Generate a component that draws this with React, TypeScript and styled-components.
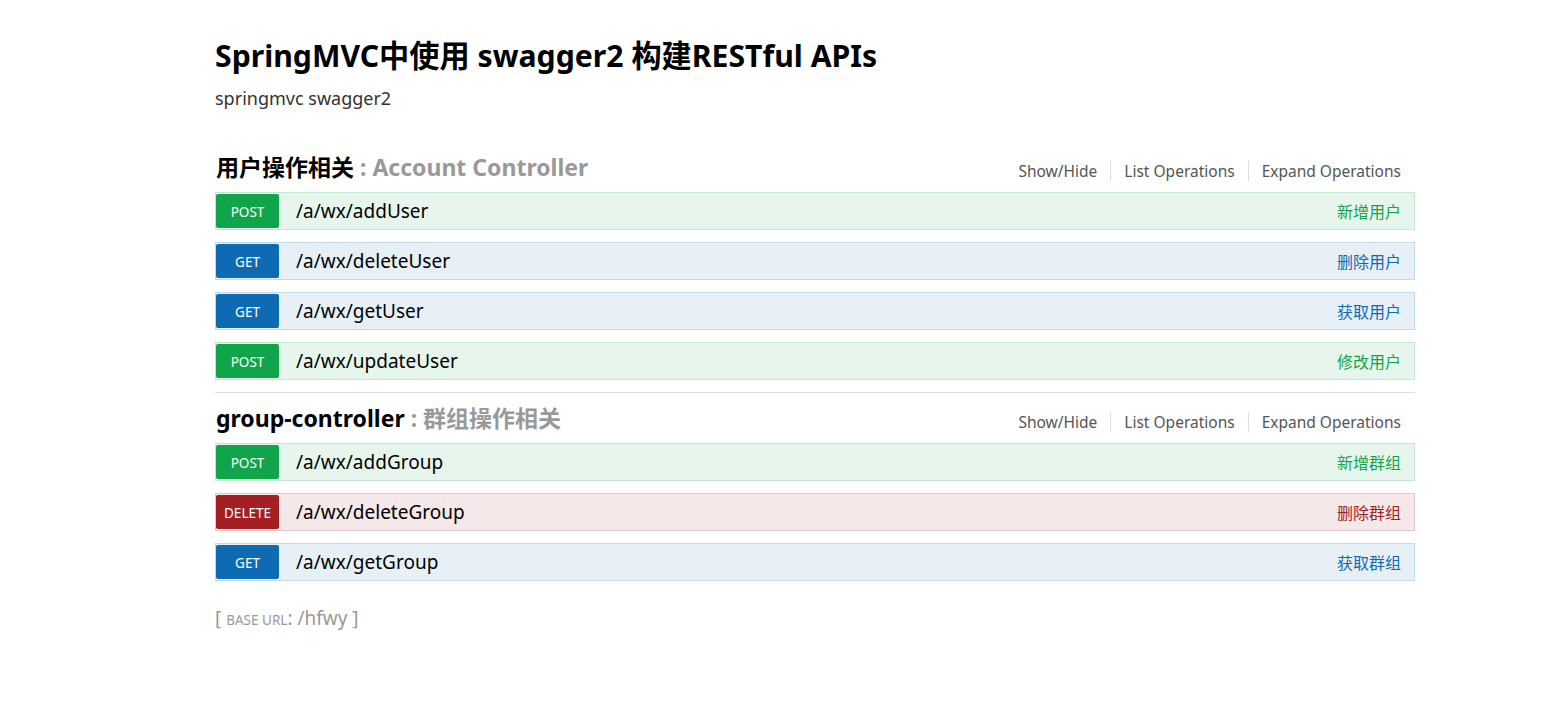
import styled, { createGlobalStyle } from "styled-components"

const GlobalStyle = createGlobalStyle`
  html, body {
    margin: 0;
    padding: 0;
    background: #fff;
  }
  body {
    font-family: "Noto Sans", "Open Sans", "Noto Sans CJK SC", sans-serif;
    color: #000;
  }
`

type Method = "post" | "get" | "delete"

const palette: Record<Method, { badge: string; bg: string; border: string; text: string }> = {
  post: { badge: "#10a54a", bg: "#e7f6ec", border: "#c3e8d1", text: "#10a54a" },
  get: { badge: "#0f6ab4", bg: "#e7f0f7", border: "#c3d9ec", text: "#0f6ab4" },
  delete: { badge: "#a41e22", bg: "#f5e8e8", border: "#e8c6c7", text: "#a41e22" },
}

const Wrap = styled.div`
  width: 1200px;
  padding: 36px 0 60px 215px;
`

const Title = styled.h1`
  margin: 0;
  font-size: 30.2px;
  font-weight: 700;
  line-height: 40px;
  font-family: "Noto Sans", "Noto Sans CJK SC", sans-serif;
`

const Subtitle = styled.div`
  margin-top: 10px;
  font-size: 18px;
  line-height: 24px;
  color: #333;
`

const Resources = styled.div`
  margin-top: 37px;
`

const Resource = styled.section<{ $divider?: boolean }>`
  padding-top: ${(p) => (p.$divider ? "5px" : "0")};
  border-top: ${(p) => (p.$divider ? "1px solid #ddd" : "none")};
`

const Heading = styled.div`
  display: flex;
  align-items: center;
  justify-content: space-between;
  height: 40px;
  margin-bottom: 5px;
`

const ResourceName = styled.h2`
  margin: 0;
  font-size: 23px;
  font-weight: 700;
  line-height: 30px;
  color: #000;
  padding-left: 1px;
`

const ResourceDesc = styled.span`
  color: #999;
`

const Links = styled.div`
  display: flex;
  align-items: center;
  padding: 8px 14px 0 0;
`

const LinkItem = styled.span<{ $last?: boolean }>`
  font-size: 15.5px;
  color: #555;
  line-height: 20px;
  padding: 0 13px;
  border-right: ${(p) => (p.$last ? "none" : "1px solid #ddd")};
  &:last-child {
    padding-right: 0;
  }
`

const OpList = styled.ul`
  list-style: none;
  margin: 0;
  padding: 0;
  display: flex;
  flex-direction: column;
  gap: 12px;
  padding-bottom: 12px;
`

const Operation = styled.li<{ $method: Method }>`
  display: flex;
  align-items: center;
  height: 36px;
  background: ${(p) => palette[p.$method].bg};
  border: 1px solid ${(p) => palette[p.$method].border};
`

const Badge = styled.span<{ $method: Method }>`
  flex: none;
  width: 63px;
  height: 34px;
  display: flex;
  align-items: center;
  justify-content: center;
  padding-top: 2px;
  box-sizing: border-box;
  border-radius: 2px;
  background: ${(p) => palette[p.$method].badge};
  color: #fff;
  font-size: 13.5px;
  text-transform: uppercase;
`

const Path = styled.span`
  flex: 1;
  margin-left: 17px;
  font-size: 19px;
  color: #000;
`

const Summary = styled.span<{ $method: Method }>`
  margin-right: 13px;
  font-size: 16px;
  color: ${(p) => palette[p.$method].text};
  font-family: "Noto Sans CJK SC", sans-serif;
`

const BaseUrl = styled.div`
  margin-top: 12px;
  font-size: 19px;
  color: #999;
`

const Small = styled.span`
  font-size: 13.5px;
`

const resources: {
  name: string
  desc: string
  ops: { method: Method; path: string; summary: string }[]
}[] = [
  {
    name: "用户操作相关",
    desc: "Account Controller",
    ops: [
      { method: "post", path: "/a/wx/addUser", summary: "新增用户" },
      { method: "get", path: "/a/wx/deleteUser", summary: "删除用户" },
      { method: "get", path: "/a/wx/getUser", summary: "获取用户" },
      { method: "post", path: "/a/wx/updateUser", summary: "修改用户" },
    ],
  },
  {
    name: "group-controller",
    desc: "群组操作相关",
    ops: [
      { method: "post", path: "/a/wx/addGroup", summary: "新增群组" },
      { method: "delete", path: "/a/wx/deleteGroup", summary: "删除群组" },
      { method: "get", path: "/a/wx/getGroup", summary: "获取群组" },
    ],
  },
]

export default function App() {
  return (
    <>
      <GlobalStyle />
      <Wrap>
        <Title>SpringMVC中使用 swagger2 构建RESTful APIs</Title>
        <Subtitle>springmvc swagger2</Subtitle>
        <Resources>
          {resources.map((r, i) => (
            <Resource key={r.name} $divider={i > 0}>
              <Heading>
                <ResourceName>
                  {r.name} <ResourceDesc>: {r.desc}</ResourceDesc>
                </ResourceName>
                <Links>
                  <LinkItem>Show/Hide</LinkItem>
                  <LinkItem>List Operations</LinkItem>
                  <LinkItem $last>Expand Operations</LinkItem>
                </Links>
              </Heading>
              <OpList>
                {r.ops.map((op) => (
                  <Operation key={op.path} $method={op.method}>
                    <Badge $method={op.method}>{op.method}</Badge>
                    <Path>{op.path}</Path>
                    <Summary $method={op.method}>{op.summary}</Summary>
                  </Operation>
                ))}
              </OpList>
            </Resource>
          ))}
        </Resources>
        <BaseUrl>
          [ <Small>BASE URL</Small>: /hfwy ]
        </BaseUrl>
      </Wrap>
    </>
  )
}
